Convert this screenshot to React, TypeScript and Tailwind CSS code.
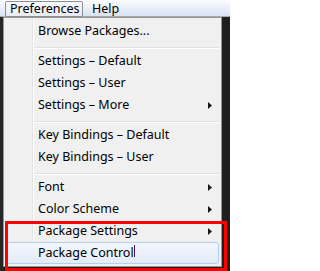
import React from "react";

function Arrow() {
  return (
    <svg width="4" height="7" viewBox="0 0 4 7" className="block">
      <path d="M0 0 L4 3.5 L0 7 Z" fill="#1a1a1a" />
    </svg>
  );
}

function Item({ label, sub, active }: { label: string; sub?: boolean; active?: boolean }) {
  if (active) {
    return (
      <div className="h-[22px] flex items-center justify-between pl-[31px] pr-[6px] rounded-[3px] border border-[#b4cff2] bg-gradient-to-b from-[#f3f7fd] to-[#e2ebf8]">
        <span>{label}</span>
        {sub ? <Arrow /> : null}
      </div>
    );
  }
  return (
    <div className="h-[22px] flex items-center justify-between pl-[32px] pr-[7px]">
      <span>{label}</span>
      {sub ? <Arrow /> : null}
    </div>
  );
}

function Sep() {
  return (
    <div className="h-[8px] pt-[5px] pl-[28px]">
      <div className="h-[1px] bg-[#e0e0e0]" />
      <div className="h-[1px] bg-white" />
    </div>
  );
}

export default function App() {
  return (
    <div className="relative w-[230px] h-[271px] overflow-hidden bg-[#1c1c1c] font-['Noto_Sans','Open_Sans',sans-serif] text-[12.5px] leading-none text-black">
      <div className="h-[17px] flex items-start pt-[1px] pl-[5px] border-b border-[#a7a9ad] bg-gradient-to-b from-[#fbfcfe] to-[#d9e2f2]">
        <div className="h-[16px] w-[78px] flex items-center pl-[4px] border border-[#8c8f94] rounded-[2px] bg-gradient-to-b from-[#f8f9fb] to-[#e8ecf2]">
          Preferences
        </div>
        <div className="h-[16px] flex items-center ml-[9px]">Help</div>
      </div>
      <div className="flex h-[254px]">
        <div className="w-[3px] bg-[#262626]" />
        <div className="relative w-[219px] h-[250px] border border-[#979797] bg-[#f0f0f0] p-[2px]">
          <div className="absolute left-[28px] top-0 bottom-0 w-[1px] bg-[#e2e3e3]" />
          <div className="absolute left-[29px] top-0 bottom-0 w-[1px] bg-white" />
          <div className="relative">
            <Item label="Browse Packages..." />
            <Sep />
            <Item label="Settings – Default" />
            <Item label="Settings – User" />
            <Item label="Settings – More" sub />
            <Sep />
            <Item label="Key Bindings – Default" />
            <Item label="Key Bindings – User" />
            <Sep />
            <Item label="Font" sub />
            <Item label="Color Scheme" sub />
            <Item label="Package Settings" sub />
            <Item label="Package Control" active />
          </div>
        </div>
        <div className="flex-1 bg-[#1f1f1f]" />
      </div>
      <div className="absolute left-[134px] top-[245px] w-[1px] h-[12px] bg-[#4b1450]" />
      <div className="absolute left-[5px] top-[221px] w-[222px] h-[50px] border-[3px] border-[#ff0000]" />
    </div>
  );
}
